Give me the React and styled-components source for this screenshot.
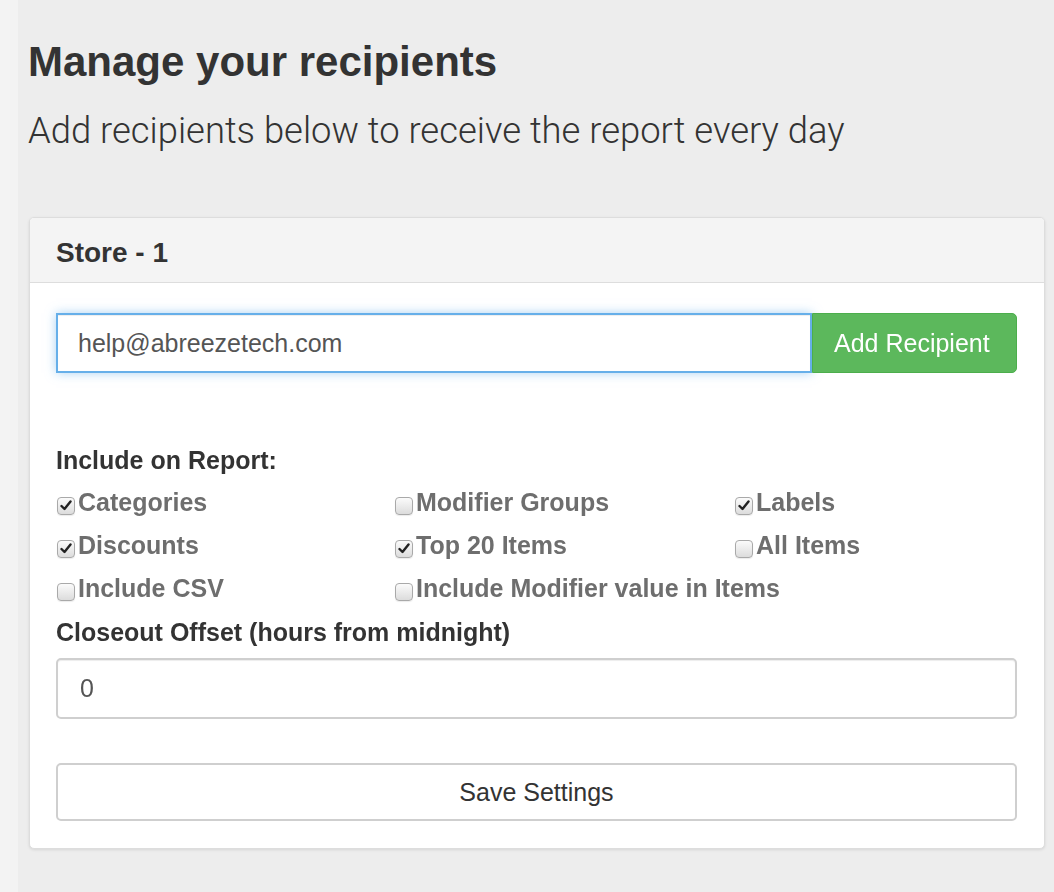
import React from 'react';
import styled, { createGlobalStyle } from 'styled-components';

const GlobalStyle = createGlobalStyle`
  html, body {
    margin: 0;
    padding: 0;
    background: #f3f3f3;
    font-family: "Liberation Sans", Arial, sans-serif;
    color: #333;
  }
  * { box-sizing: border-box; }
`;

const Page = styled.div`
  display: flex;
  min-height: 892px;
`;

const Gutter = styled.div`
  width: 18px;
  flex-shrink: 0;
  background: #f3f3f3;
`;

const Main = styled.main`
  flex: 1;
  background: #ededed;
  padding: 0 9px 40px 11px;
`;

const Title = styled.h1`
  margin: 39px 0 0 -1px;
  font-size: 42px;
  line-height: 1.1;
  font-weight: 700;
  color: #333;
`;

const Lead = styled.p`
  margin: 24px 0 0 -1px;
  font-family: Roboto, "Liberation Sans", sans-serif;
  font-weight: 300;
  font-size: 36.4px;
  line-height: 43px;
  color: #333;
`;

const Panel = styled.section`
  margin-top: 65px;
  background: #fff;
  border: 1px solid #ddd;
  border-radius: 5px;
  box-shadow: 0 1px 3px rgba(0, 0, 0, 0.1);
`;

const PanelHeading = styled.div`
  background: #f4f4f4;
  border-bottom: 1px solid #ddd;
  border-radius: 4px 4px 0 0;
  padding: 19px 26px 13px;
`;

const PanelTitle = styled.h3`
  margin: 0;
  font-size: 28px;
  line-height: 32px;
  font-weight: 700;
  color: #333;
`;

const PanelBody = styled.div`
  padding: 30px 27px 27px 26px;
`;

const InputGroup = styled.div`
  display: flex;
  height: 60px;
`;

const TextInput = styled.input`
  flex: 1;
  min-width: 0;
  height: ${p => p.$height || '60px'};
  width: 100%;
  font-family: "Liberation Sans", Arial, sans-serif;
  font-size: 25px;
  color: #555;
  background: #fff;
  padding: 0 20px 0 ${p => (p.$focused ? '20px' : '22px')};
  border: ${p => (p.$focused ? '2px solid #66afe9' : '2px solid #cfcfcf')};
  border-radius: ${p => (p.$focused ? '0' : '5px')};
  box-shadow: ${p =>
    p.$focused
      ? 'inset 0 1px 1px rgba(0,0,0,.075), 0 0 10px rgba(102,175,233,.55)'
      : 'inset 0 1px 1px rgba(0,0,0,.075)'};
  outline: none;
  caret-color: #222;
`;

const AddButton = styled.button`
  width: 205px;
  flex-shrink: 0;
  background: #5cb85c;
  border: 1px solid #4cae4c;
  border-radius: 0 5px 5px 0;
  color: #fff;
  font-family: "Liberation Sans", Arial, sans-serif;
  font-size: 25px;
  padding: 0 0 0 3px;
  text-align: left;
  padding-left: 21px;
  cursor: pointer;
`;

const SectionLabel = styled.div`
  margin-top: ${p => p.$top || '0'};
  font-size: 25px;
  line-height: 30px;
  font-weight: 700;
  color: #333;
`;

const OptionGrid = styled.div`
  margin-top: 6px;
  display: grid;
  grid-template-columns: 338px 340px 1fr;
  grid-auto-rows: 43px;
`;

const Option = styled.div`
  display: flex;
  align-items: center;
  font-size: 25px;
  font-weight: 700;
  color: #6e6e6e;
  line-height: 43px;
  white-space: nowrap;
  cursor: pointer;
`;

const Box = styled.span`
  flex: none;
  box-sizing: border-box;
  width: 18px;
  min-width: 18px;
  height: 18px;
  margin: 6px 3px 0 1px;
  display: flex;
  align-items: center;
  justify-content: center;
  border: 1px solid #a9a9a9;
  border-radius: 4px;
  background: linear-gradient(#fbfbfb, #dcdcdc);
  box-shadow: 0 1px 1px rgba(0, 0, 0, 0.08);
`;

const FieldWrap = styled.div`
  margin-top: 11px;
`;

const SaveButton = styled.button`
  margin-top: 44px;
  width: 100%;
  height: 58px;
  background: #fff;
  border: 2px solid #cfcfcf;
  border-radius: 5px;
  font-family: "Liberation Sans", Arial, sans-serif;
  font-size: 25px;
  color: #333;
  cursor: pointer;
`;

const Check = () => (
  <svg width="12" height="11" viewBox="0 0 12 11">
    <path d="M1.5 6 L4.5 9 L10.5 1.5" fill="none" stroke="#222" strokeWidth="2.4" strokeLinecap="round" strokeLinejoin="round" />
  </svg>
);

const options = [
  { label: 'Categories', checked: true },
  { label: 'Modifier Groups', checked: false },
  { label: 'Labels', checked: true },
  { label: 'Discounts', checked: true },
  { label: 'Top 20 Items', checked: true },
  { label: 'All Items', checked: false },
  { label: 'Include CSV', checked: false },
  { label: 'Include Modifier value in Items', checked: false },
];

const App = () => {
  return (
    <>
      <GlobalStyle />
      <Page>
        <Gutter />
        <Main>
          <Title>Manage your recipients</Title>
          <Lead>Add recipients below to receive the report every day</Lead>

          <Panel>
            <PanelHeading>
              <PanelTitle>Store - 1</PanelTitle>
            </PanelHeading>
            <PanelBody>
              <InputGroup>
                <TextInput $focused defaultValue="help@abreezetech.com" autoFocus />
                <AddButton>Add Recipient</AddButton>
              </InputGroup>

              <SectionLabel $top="72px">Include on Report:</SectionLabel>
              <OptionGrid>
                {options.map((opt, i) => (
                  <Option key={i}>
                    <Box>{opt.checked && <Check />}</Box>
                    {opt.label}
                  </Option>
                ))}
              </OptionGrid>

              <SectionLabel $top="7px">Closeout Offset (hours from midnight)</SectionLabel>
              <FieldWrap>
                <TextInput $height="61px" defaultValue="0" />
              </FieldWrap>

              <SaveButton>Save Settings</SaveButton>
            </PanelBody>
          </Panel>
        </Main>
      </Page>
    </>
  );
};

export default App;
